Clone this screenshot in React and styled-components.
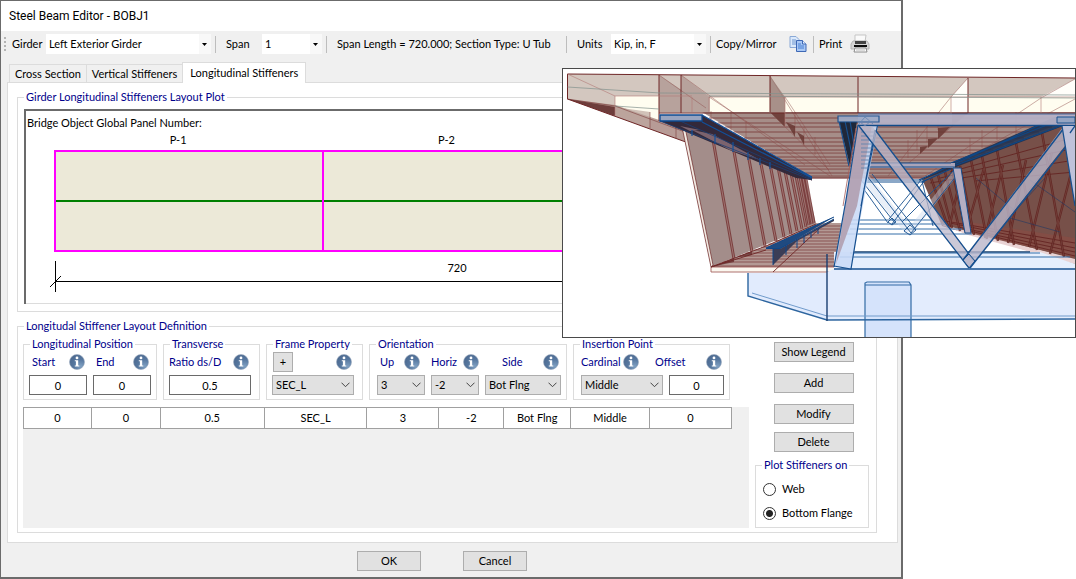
import React, { useState } from "react";
import styled, { createGlobalStyle, css } from "styled-components";

const GlobalStyle = createGlobalStyle`
  *, *::before, *::after { box-sizing: border-box; }
  body { margin: 0; background: #fff; }
  body, button, input, select {
    font-family: Lato, Roboto, "Liberation Sans", sans-serif;
    font-size: 11px;
    line-height: 14px;
    color: #000;
  }
`;

const NAVY = "#00008b";
const LINE = "#dcdcdc";

/* ---------- window ---------- */
const Page = styled.div`
  position: relative;
  padding-right: 173px;
`;
const Dialog = styled.main`
  background: #f0f0f0;
  border: solid #6b6b6b;
  border-width: 1px 2px 2px 1px;
`;
const TitleBar = styled.header`
  height: 30px;
  padding: 0 8px;
  background: #fff;
  display: flex;
  align-items: center;
`;
const Title = styled.h1`
  margin: 0;
  font-family: Roboto, sans-serif;
  font-size: 12px;
  font-weight: 400;
`;

/* ---------- toolbar ---------- */
const Toolbar = styled.div`
  height: 26px;
  display: flex;
  align-items: center;
  padding-left: 3px;
  white-space: nowrap;
`;
const Grip = styled.span`
  width: 2px;
  height: 14px;
  margin-right: 6px;
  background: repeating-linear-gradient(#b4b4b4 0 2px, transparent 2px 4px);
`;
const ToolLabel = styled.label`
  width: ${(p) => p.$w}px;
`;
const ToolText = styled.span`
  width: ${(p) => p.$w}px;
`;
const Separator = styled.span`
  width: 1px;
  height: 17px;
  margin: 0 ${(p) => p.$after}px 0 ${(p) => p.$before || 4}px;
  background: #bdbdbd;
`;
const ToolButton = styled.button`
  display: flex;
  align-items: center;
  justify-content: space-between;
  width: ${(p) => p.$w}px;
  padding: 0;
  border: 0;
  background: none;
`;

/* ---------- selects ---------- */
const SelectBox = styled.span`
  display: grid;
  align-items: center;
  width: ${(p) => p.$w}px;
  height: 20px;
  > * { grid-area: 1 / 1; }
  > svg { justify-self: end; pointer-events: none; margin-right: 4px; }
`;
const Native = styled.select`
  appearance: none;
  width: 100%;
  height: 100%;
  border-radius: 0;
  outline: 0;
  ${(p) =>
    p.$flat
      ? css`border: 0; padding: 0 3px; background: linear-gradient(90deg, #fff calc(100% - 12px), #f8f8f8 0);`
      : css`border: 1px solid #adadad; padding: 0 3px; background: #e1e1e1;`}
`;
function Select({ id, w, value, options, flat }) {
  const [v, setV] = useState(value);
  return (
    <SelectBox $w={w}>
      <Native id={id} $flat={flat} value={v} onChange={(e) => setV(e.target.value)}>
        {(options || [value]).map((o) => <option key={o}>{o}</option>)}
      </Native>
      {flat ? (
        <svg width="5" height="3" viewBox="0 0 5 3"><path d="M0 0h5L2.500 3z" /></svg>
      ) : (
        <svg width="9" height="6" viewBox="0 0 9 6"><path d="M.5.7l4 4 4-4" fill="none" stroke="#444" /></svg>
      )}
    </SelectBox>
  );
}

/* ---------- tabs ---------- */
const Tabs = styled.div`
  display: flex;
  align-items: flex-end;
  height: 25px;
  padding-left: 8px;
`;
const Tab = styled.button`
  height: ${(p) => (p.$on ? 21 : 18)}px;
  margin: 0 0 ${(p) => (p.$on ? -1 : 0)}px;
  padding: 0 ${(p) => (p.$on ? 7 : 5)}px;
  border: 1px solid ${LINE};
  border-bottom: 0;
  border-right-width: ${(p) => (p.$on ? 1 : 0)}px;
  background: ${(p) => (p.$on ? "#fff" : "#f0f0f0")};
  z-index: ${(p) => (p.$on ? 1 : 0)};
  position: relative;
  white-space: nowrap;
`;
const Panel = styled.section`
  margin: 0 3px 0 6px;
  padding: 7px 20px 9px 9px;
  border: 1px solid ${LINE};
  background: #fff;
`;

/* ---------- groups ---------- */
const Group = styled.fieldset`
  min-width: 0;
  margin: 0;
  padding: 0;
  border: 1px solid ${LINE};
`;
const DefinitionGroup = styled(Group)`
  margin-top: 7px;
`;
const Legend = styled.legend`
  margin-left: 6px;
  padding: 0 2px;
  height: 14px;
  color: ${NAVY};
  white-space: nowrap;
`;

/* ---------- layout plot ---------- */
const Plot = styled.div`
  height: 195px;
  margin: 5px 6px 7px;
  padding: 5px 11px 0 1px;
  border: solid #6b6b6b;
  border-width: 2px 0 0 2px;
  box-shadow: inset 0 -1px ${LINE};
`;
const PlotBody = styled.div`
  padding-left: 27px;
`;
const PanelNames = styled.div`
  display: grid;
  grid-template-columns: repeat(3, 1fr);
  height: 20px;
  align-items: center;
  margin: 0 10px 0 -10px;
  text-align: center;
`;
const Girder = styled.div`
  display: grid;
  grid-template-columns: repeat(3, 1fr);
  gap: 2px;
  height: 102px;
  border: 2px solid #f0f;
  background: #f0f;
`;
const GirderPanel = styled.div`
  background: linear-gradient(#ece9d8 48px, #008000 48px 50px, #ece9d8 50px);
`;
const Dimension = styled.div`
  display: grid;
  grid-template-rows: 20px 1px 1fr;
  height: 31px;
  margin: 9px 0 0 1px;
  border: solid #000;
  border-width: 0 1px;
  text-align: center;
  i { background: #000; }
`;
const Slash = styled.svg`
  display: block;
  margin-left: -6px;
`;

/* ---------- definition ---------- */
const Definition = styled.div`
  display: flex;
  gap: 6px;
  padding: 4px 7px 4px 5px;
`;
const Main = styled.div`
  flex: 1;
  min-width: 0;
  display: flex;
  flex-direction: column;
  gap: 7px;
`;
const GroupRow = styled.div`
  display: flex;
  gap: 6px;
  > fieldset { flex: none; }
`;
const Fields = styled.div`
  display: flex;
  gap: 6px;
  padding: 1px ${(p) => p.$right}px 4px ${(p) => p.$left || 5}px;
`;
const FieldBox = styled.div`
  display: flex;
  flex-direction: column;
  align-items: flex-end;
  gap: 3px;
  width: ${(p) => p.$w}px;
`;
const FieldHead = styled.div`
  display: flex;
  align-items: center;
  justify-content: space-between;
  width: ${(p) => p.$w}px;
  height: 20px;
  padding: 0 ${(p) => p.$end}px 0 ${(p) => p.$start}px;
  color: ${NAVY};
  white-space: nowrap;
  > svg { flex: none; }
`;
const TextInput = styled.input`
  width: 100%;
  height: 20px;
  padding: 0;
  border: 1px solid #6a6a6a;
  background: #fff;
  text-align: center;
`;
const Button = styled.button`
  width: ${(p) => p.$w || 80}px;
  height: 20px;
  padding: 0;
  border: 1px solid #adadad;
  background: #e1e1e1;
`;

function Info() {
  return (
    <svg width="16" height="16" viewBox="0 0 16 16" aria-hidden="true">
      <defs>
        <radialGradient id="infoFill" cx="75%" cy="78%" r="90%">
          <stop offset="0" stopColor="#7fa0c2" />
          <stop offset=".5" stopColor="#56779f" />
          <stop offset="1" stopColor="#4b688e" />
        </radialGradient>
      </defs>
      <circle cx="8" cy="8" r="7.500" fill="url(#infoFill)" stroke="#9aaabd" strokeWidth=".6" />
      <circle cx="8" cy="3.900" r="1.400" fill="#fff" />
      <path d="M5.800 6.300H9.200V11.600H10.300V12.600H5.800V11.600H6.900V7.300H5.800z" fill="#fff" />
    </svg>
  );
}

function Field({ id, label, w, headW, start = 3, end = 2, type = "text", value }) {
  return (
    <FieldBox $w={w}>
      <FieldHead $w={headW || w} $start={start} $end={end}>
        <label htmlFor={id}>{label}</label>
        <Info />
      </FieldHead>
      {type === "text" ? <TextInput id={id} defaultValue={value} /> : <Select id={id} w={w} value={value} />}
    </FieldBox>
  );
}

const GridArea = styled.div`
  height: 121px;
  padding-right: 17px;
  background: #f0f0f0;
`;
const Table = styled.table`
  width: 100%;
  height: 21px;
  table-layout: fixed;
  border-collapse: collapse;
  background: #fff;
  td {
    height: 21px;
    padding: 0;
    border: 1px solid #a0a0a0;
    text-align: center;
  }
`;
const Col = styled.col`
  width: ${(p) => (p.$share / 709) * 100}%;
`;
const Side = styled.div`
  width: 114px;
  display: flex;
  flex-direction: column;
  align-items: center;
  padding: 5px 0 0;
  > button { margin: 0 0 11px 3px; }
  > button:nth-of-type(3) { margin-bottom: 8px; }
  > button:nth-of-type(4) { margin-bottom: 6px; }
  > fieldset { width: 100%; }
`;
const Radios = styled.div`
  display: grid;
  gap: 10px;
  padding: 10px 7px 7px;
`;
const RadioLabel = styled.label`
  display: flex;
  align-items: center;
  gap: 6px;
  height: 14px;
  white-space: nowrap;
`;
const Radio = styled.input`
  appearance: none;
  width: 13px;
  height: 13px;
  margin: 0;
  border: 1px solid #333;
  border-radius: 50%;
  background: #fff;
  &:checked { background: radial-gradient(circle, #222 3px, #fff 4px); }
`;
const Footer = styled.footer`
  display: flex;
  justify-content: center;
  gap: 42px;
  padding: 8px 18px 6px 0;
`;

/* ---------- 3D view ---------- */
const View = styled.figure`
  position: absolute;
  top: 68px;
  right: 0;
  width: 514px;
  margin: 0;
  border: 1px solid #4a4a4a;
  background: #fff;
  svg { display: block; width: 100%; }
`;

const RED = "#6e2626";
const BLUE = "#17508f";
const P = ({ d, f = "none", s = "none", w = 1, o = 1 }) => (
  <path d={d} fill={f} stroke={s} strokeWidth={w} opacity={o} />
);
const lines = (list) => list.map((l) => `M${l[0]} ${l[1]}L${l[2]} ${l[3]}`).join("");

const deckRows = [118, 123, 127, 132, 138, 142, 146, 150, 153, 157, 160, 163, 166, 169, 173, 176];
const webRibs = [
  [712, 134, 734, 259], [733, 146, 752, 252], [748, 154, 765, 246], [760, 159, 776, 241],
  [770, 164, 784, 237], [778, 167, 791, 234], [785, 171, 797, 231], [791, 173, 802, 229],
  [796, 176, 806, 227], [800, 177, 809, 225], [803, 178, 812, 224], [806, 179, 814, 223],
];
const farRibs = [
  [931, 178, 948, 227], [938, 175, 952, 228], [945, 172, 960, 231], [952, 169, 966, 233],
  [960, 166, 974, 235], [971, 160, 987, 239], [982, 156, 998, 241], [997, 150, 1014, 245],
  [1016, 143, 1037, 250], [1042, 133, 1064, 257], [949, 228, 962, 172], [966, 232, 984, 168],
  [985, 238, 1003, 165], [1008, 243, 1026, 160], [1029, 247, 1052, 152], [1050, 254, 1075, 158],
];

function BridgeView() {
  return (
    <View aria-label="Bridge 3D view">
      <svg viewBox="563 69 512 268">
        {/* slab fascia */}
        <P d="M567.500 74L1075 78V113H659L659 121L567.500 99z" f="#d3c7bf" />
        <P d="M615 96H659V121L615 115z" f="#fffdf0" />
        <P d="M709 97H770V112H709zM785 97H951V113H785zM968 97H1075V113H968z" f="#fffdf0" />
        <P d="M951 97L968 78V113H951zM1041 97L1075 79V97z" f="#fffefa" />
        <P d="M659 75L692 97V112H659zM681 75L710 97V112H681z" f="#a88f88" o=".65" />
        {/* overhang soffit */}
        <P d="M567.500 99L615 105L662 121L812 180L683 141z" f="#a5827c" o=".8" />
        <P d="M567.500 99L615 107V116z" f="#6d3d3b" />
        <P d="M615 107L650 112V128L615 116z" f="#bda8a0" o=".7" />
        <P d={lines([[650, 112, 650, 128], [676, 121, 676, 138], [696, 129, 696, 145], [715, 137, 715, 151], [735, 144, 735, 158], [753, 152, 753, 163], [567, 99, 615, 106], [615, 106, 812, 179]])} s={RED} w=".7" o=".7" />
        {/* deck soffit */}
        <P d="M702 112H1075V118L951 165L922 178H812z" f="#a58e89" />
        <P d={deckRows.map((y) => `M${702 + (y - 114) * 1.75} ${y}H${1075 - Math.max(0, y - 118) * 2.55}`).join("")} s={RED} w=".9" o=".75" />
        <P d={deckRows.map((y) => `M${702 + (y - 114) * 1.75} ${y + 2}H${1075 - Math.max(0, y - 118) * 2.55}`).join("")} s="#b08e89" w=".7" o=".6" />
        <P d={lines([[709, 97, 830, 176], [659, 75, 706, 108], [681, 75, 805, 165], [770, 76, 832, 176], [770, 112, 829, 170], [785, 97, 830, 165], [951, 97, 888, 176], [968, 78, 951, 97], [968, 113, 898, 172], [1041, 98, 925, 176], [1075, 79, 1041, 98], [1075, 99, 940, 172], [711, 111, 711, 121], [731, 112, 731, 133], [746, 121, 746, 142], [795, 112, 795, 134], [804, 127, 804, 146], [815, 137, 815, 155], [938, 113, 938, 130], [927, 122, 927, 142], [917, 130, 917, 150], [908, 140, 908, 158], [1016, 112, 1016, 135], [997, 124, 997, 140], [982, 130, 982, 148], [970, 138, 970, 154]])} s="#8c4b48" w=".7" o=".65" />
        <P d="M770 76L785 97V127L770 112z" f="#9a7d77" o=".75" />
        <P d="M771 113L785 113V127zM786 122L795 126V137zM797 132L804 136V145zM952 113H968L952 126zM938 128L950 127L938 139zM928 139L938 138L928 148zM920 147L928 146L920 154z" f="#683733" o=".85" />
        <P d="M567.500 99V74L1075 78M567.500 99L683 141L812 180M659 113H1075M659 75V121M681 75V113M770 76V112M858 77V113M968 78V113M812 178H925" s={RED} />
        <P d="M567.500 74L615 96H692M709 97H1075M615 96V116M692 97V112M709 97V112M785 97V127M951 97V113M1041 97V113" s="#b17b77" w=".8" o=".75" />
        <P d="M567.500 87L660 93L1075 95M615 106L659 109M709 96L1075 98" s="#81918c" w=".7" />

        {/* left girder web */}
        <P d="M681 122L806 179L816 224L711 267z" f="#a38d8a" />
        <P d={lines(webRibs)} s={RED} w="3" o=".75" />
        <P d={lines(webRibs)} s="#a8827e" w=".8" />
        <P d="M681 122H684L713 265L711 267z" f="#f2ebe4" s={RED} w=".7" />
        {/* left top flange */}
        <P d="M660 121L702 115L812 177V180L796 178z" f="#33293a" />
        <P d="M692 130L712 134L760 160L730 150zM680 126L700 130L690 131z" f="#8e727c" o=".8" />
        <P d={lines([[660, 121, 812, 180], [680, 121, 812, 179]])} s="#1d3f74" w=".8" />
        <P d={lines([[702, 122, 812, 178], [702, 115, 812, 177], [692, 130, 692, 136], [715, 134, 715, 144], [733, 142, 733, 152], [748, 152, 748, 160], [760, 158, 760, 165], [770, 162, 770, 169]])} s="#11509a" w="1.200" />
        <P d="M660 115H702V121H660z" f="#98a4c0" s="#0e4b91" w="1.300" />

        {/* left girder bottom flange */}
        <P d="M711 267L766 246L816 223H843L835 268z" f="#b39994" />
        <P d="M711 267L734 258V262zM734 258L752 251V255z" f="#774b49" />
        <P d="M711 267H835V272H711z" f="#fbf7ef" s="#a4615d" w=".9" />
        <P d={[226, 229, 232, 235, 238, 241, 244, 247, 250, 253, 256, 259, 262, 266].map((y) => `M${711 + (267 - y) * 2.5} ${y}H${834 + (268 - y) / 6}`).join("")} s={RED} w=".8" o=".75" />
        <P d="M711 267L766 246L816 224M711 267L766 250M773 272L820 228" s={RED} w=".9" />
        <P d="M773 249L780 249L834 219V221L797 241L773 265z" f="#3b3d56" />
        <P d="M766 248L834 217L780 249z" f="#1f4a80" />
        <P d="M766 248L834 217M766 248.500H780L834 219M773 249V265M786 245V255M797 239V248M804 235V243M811 232V238M818 228V234" s="#0e4789" w="1" />

        {/* right girder web */}
        <P d="M922 179L951 166L1062 125H1075V264L969 234L942 226z" f="#775049" />
        <P d="M940 224L1075 259V264L968 235z" f="#e9d3d4" />
        <P d="M942 218L1075 238V258L969 233z" f="#844c45" o=".9" />
        <P d={lines([[945, 221, 1075, 243], [950, 223, 1075, 248], [958, 227, 1075, 252], [966, 230, 1075, 256], [975, 181, 1075, 172], [930, 183, 1075, 160], [940, 178, 1075, 148], [950, 172, 1075, 137]])} s="#642522" w=".9" />
        <P d={lines(farRibs)} s="#5f211f" w="2.400" o=".85" />
        <P d={lines(farRibs)} s="#80524b" w=".5" />
        <P d={lines([[976, 178, 1014, 210], [1045, 178, 1016, 210], [1030, 180, 1075, 212], [1005, 220, 1040, 176], [1010, 218, 1060, 232]])} s="#283b62" w=".8" o=".8" />
        <P d="M919 181L951 163L1057 116L1075 122L1063 126L951 169z" f="#22314e" o=".92" />
        <P d={lines([[919, 180, 1057, 117], [951, 163, 1057, 121], [951, 167, 1063, 125], [922, 182, 951, 169]])} s="#0d4787" w="1.100" />

        {/* bent cap and column */}
        <P d="M834 252H1040L1075 264V269H834z" f="#e6effd" />
        <P d="M748 273H827V320L748 296z" f="#e1ebfd" />
        <P d="M827 272L834 269H1075V319L827 320z" f="#e3ecfd" />
        <P d="M865 283H911V338H865z" f="#d5e3fb" />
        <P d="M865 338V283L867 282H909L911 285V338M865 285H911" s="#336ba5" w="1.200" />
        <P d="M748 273V296L827 320L1075 319" s="#2d659f" w="1.400" />
        <P d="M752 293L827 316H1075" s="#719bcb" />
        <P d="M827 254V321" s="#193e70" w="1.400" />
        <P d="M834 269H1075" s={BLUE} w="1.500" />
        <P d="M853 252H1030" s="#173e6b" w="1.600" />
        <P d="M850 253H1040M840 257H1070M852 220H932M850 224H945M850 229H962M846 234H972" s="#346fa9" w="1" />

        {/* far cross frame */}
        <P d="M865 163H955V168H865z" f="#aaa4b8" />
        <P d="M862 163H951M864 167H955M860 180H925M862 182H925" s={BLUE} />
        <P d="M867 173L913 230L905 233L863 182zM955 169L960 172L913 233L908 229z" f="#c9d7ee" o=".4" />
        <P d={lines([[861, 180, 895, 223], [867, 176, 911, 233], [872, 174, 916, 230], [863, 188, 888, 223], [955, 169, 902, 222], [961, 170, 911, 233], [925, 180, 892, 224], [921, 180, 889, 219], [922, 181, 933, 226]])} s={BLUE} w=".9" />
        <P d="M904 231L910 225L916 230L910 235zM888 222L892 218L896 222L892 225z" s={BLUE} w=".9" />
        <P d="M953 168H961L971 233H965z" f="#b4aec3" s={BLUE} />

        {/* near cross frame */}
        <P d="M839 121H857L850 166z" f="#20283a" />
        <P d="M839 121L849 166M845 121L852 155M850 121L854 145" s={BLUE} w="1.200" />
        <P d="M858 125H878L851 269L834 266z" f="#c9dbf7" o=".88" />
        <P d="M858 125L872 125L857 206L836 264z" f="#ad99a8" o=".82" />
        <P d="M858 125L846 200L834 267M834 266L851 269L864 190L878 123M875 130L861 206" s={BLUE} w="1.200" />
        <P d="M856 128L843 206" s="#a65d59" w=".8" />
        <P d={[132, 136, 140, 144, 148, 152, 156, 160, 164, 168].map((y) => `M861 ${y}H${877 - (y - 125) / 6}`).join("")} s="#577fac" w=".8" />
        <P d="M858 114H1075V125H858z" f="#b5b1c6" o=".95" />
        <P d="M858 114H1075" s="#4a6b9c" w="1" />
        <P d="M858 125.500H1075" s="#114a89" w="1.600" />
        <P d="M859 126H872L975 261L969 268z" f="#bbb7ca" o=".75" />
        <P d="M859 126L969 268M876 131L975 262" s={BLUE} w="1.300" />
        <P d="M1063 127L1075 133L970 268L963 260z" f="#b9b5c9" o=".8" />
        <P d="M1064 128L963 260M1075 135L970 268" s={BLUE} w="1.500" />
        <P d="M963 260L969 254L975 261L969 268z" s={BLUE} />
        <P d="M1062 126H1075V206z" f="#bfc2da" />
        <P d="M1062 126L1075 206M1075 126L1070 133" s={BLUE} w="1.300" />
        <P d="M838 116H879V122H838z" f="#9eabc8" o=".9" s={BLUE} w="1.200" />
        <P d="M1057 117H1075V123H1057z" f="#96a5c2" s={BLUE} />
        <P d="M858 125L865 117L873 124M860 122L865 126L871 121" s="#6585b3" w=".8" />
      </svg>
    </View>
  );
}

const CopyIcon = () => (
  <svg width="18" height="18" viewBox="0 0 18 18" aria-hidden="true">
    <path d="M1 1.500h6l3 3v8H1z" fill="#dbe9fb" stroke="#8aa9d6" />
    <path d="M3 5h4M3 7h5M3 9h5" stroke="#6d95cf" />
    <path d="M7.500 5.500h6l3.500 3.500v7.500H7.500z" fill="#a9c8f5" stroke="#3e68b5" />
    <path d="M13.500 5.500V9H17" fill="#e7f1ff" stroke="#3e68b5" />
    <path d="M9 9h3M9 11h6M9 13h6" stroke="#477fd2" />
  </svg>
);
const PrintIcon = () => (
  <svg width="20" height="20" viewBox="0 0 20 20" aria-hidden="true">
    <path d="M5 1h11l-1 7H5z" fill="#fafafa" stroke="#c5c5c5" />
    <path d="M3 7h14l2 3v5H1v-5z" fill="#d5d5d5" stroke="#b4b4b4" />
    <path d="M5 7h11v3H5z" fill="#444" />
    <path d="M4 11h13v2H4z" fill="#0c0c0c" />
    <path d="M5 14h11l1 4H4z" fill="#fff" stroke="#8a8a8a" />
    <path d="M6 16h9" stroke="#bbb" />
  </svg>
);

const columns = [68, 69, 104, 103, 72, 65, 67, 79, 82];
const row = ["0", "0", "0.5", "SEC_L", "3", "-2", "Bot Flng", "Middle", "0"];

export default function App() {
  return (
    <Page>
      <GlobalStyle />
      <Dialog>
        <TitleBar><Title>Steel Beam Editor - BOBJ1</Title></TitleBar>
        <Toolbar>
          <Grip />
          <ToolLabel htmlFor="girder" $w={34}>Girder</ToolLabel>
          <Select flat id="girder" w={165} value="Left Exterior Girder" />
          <Separator $after={10} />
          <ToolLabel htmlFor="span" $w={36}>Span</ToolLabel>
          <Select flat id="span" w={60} value="1" />
          <Separator $after={10} />
          <ToolText $w={225}>Span Length = 720.000; Section Type: U Tub</ToolText>
          <Separator $after={10} />
          <ToolLabel htmlFor="units" $w={34}>Units</ToolLabel>
          <Select flat id="units" w={95} value="Kip, in, F" />
          <Separator $after={5} />
          <ToolButton $w={91}>Copy/Mirror<CopyIcon /></ToolButton>
          <Separator $before={6} $after={5} />
          <ToolButton $w={51}>Print<PrintIcon /></ToolButton>
        </Toolbar>
        <Tabs role="tablist">
          <Tab role="tab">Cross Section</Tab>
          <Tab role="tab">Vertical Stiffeners</Tab>
          <Tab role="tab" $on aria-selected="true">Longitudinal Stiffeners</Tab>
        </Tabs>
        <Panel>
          <Group>
            <Legend>Girder Longitudinal Stiffeners Layout Plot</Legend>
            <Plot>
              Bridge Object Global Panel Number:
              <PlotBody>
                <PanelNames><span>P-1</span><span>P-2</span><span>P-3</span></PanelNames>
                <Girder><GirderPanel /><GirderPanel /><GirderPanel /></Girder>
                <Dimension>
                  <span>720</span>
                  <i />
                  <Slash width="12" height="12" viewBox="0 10 12 12" overflow="visible">
                    <path d="M0 15L11 4" stroke="#000" fill="none" />
                  </Slash>
                </Dimension>
              </PlotBody>
            </Plot>
          </Group>
          <DefinitionGroup>
            <Legend>Longitudal Stiffener Layout Definition</Legend>
            <Definition>
              <Main>
                <GroupRow>
                  <Group>
                    <Legend>Longitudinal Position</Legend>
                    <Fields $right={5}>
                      <Field id="start" label="Start" w={58} value="0" />
                      <Field id="end" label="End" w={58} value="0" />
                    </Fields>
                  </Group>
                  <Group>
                    <Legend>Transverse</Legend>
                    <Fields $right={8}>
                      <Field id="ratio" label="Ratio ds/D" w={82} start={0} value="0.5" />
                    </Fields>
                  </Group>
                  <Group>
                    <Legend>Frame Property</Legend>
                    <Fields $right={8}>
                      <FieldBox $w={82}>
                        <FieldHead $w={82} $start={1} $end={2}>
                          <Button $w={20}>+</Button>
                          <Info />
                        </FieldHead>
                        <Select id="section" w={82} value="SEC_L" />
                      </FieldBox>
                    </Fields>
                  </Group>
                  <Group>
                    <Legend>Orientation</Legend>
                    <Fields $left={7} $right={5}>
                      <Field id="up" type="select" label="Up" w={48} end={5} value="3" />
                      <Field id="horiz" type="select" label="Horiz" w={48} start={0} end={0} value="-2" />
                      <Field id="side" type="select" label="Side" w={76} start={17} value="Bot Flng" />
                    </Fields>
                  </Group>
                  <Group>
                    <Legend>Insertion Point</Legend>
                    <Fields $left={7} $right={5}>
                      <Field id="cardinal" type="select" label="Cardinal" w={82} start={0} end={24} value="Middle" />
                      <Field id="offset" label="Offset" w={55} headW={69} start={0} value="0" />
                    </Fields>
                  </Group>
                </GroupRow>
                <GridArea>
                  <Table>
                    <colgroup>{columns.map((c, i) => <Col key={i} $share={c} />)}</colgroup>
                    <tbody><tr>{row.map((c, i) => <td key={i}>{c}</td>)}</tr></tbody>
                  </Table>
                </GridArea>
              </Main>
              <Side>
                <Button>Show Legend</Button>
                <Button>Add</Button>
                <Button>Modify</Button>
                <Button>Delete</Button>
                <Group>
                  <Legend>Plot Stiffeners on</Legend>
                  <Radios>
                    <RadioLabel><Radio type="radio" name="plotOn" />Web</RadioLabel>
                    <RadioLabel><Radio type="radio" name="plotOn" defaultChecked />Bottom Flange</RadioLabel>
                  </Radios>
                </Group>
              </Side>
            </Definition>
          </DefinitionGroup>
        </Panel>
        <Footer>
          <Button $w={64}>OK</Button>
          <Button $w={64}>Cancel</Button>
        </Footer>
      </Dialog>
      <BridgeView />
    </Page>
  );
}
